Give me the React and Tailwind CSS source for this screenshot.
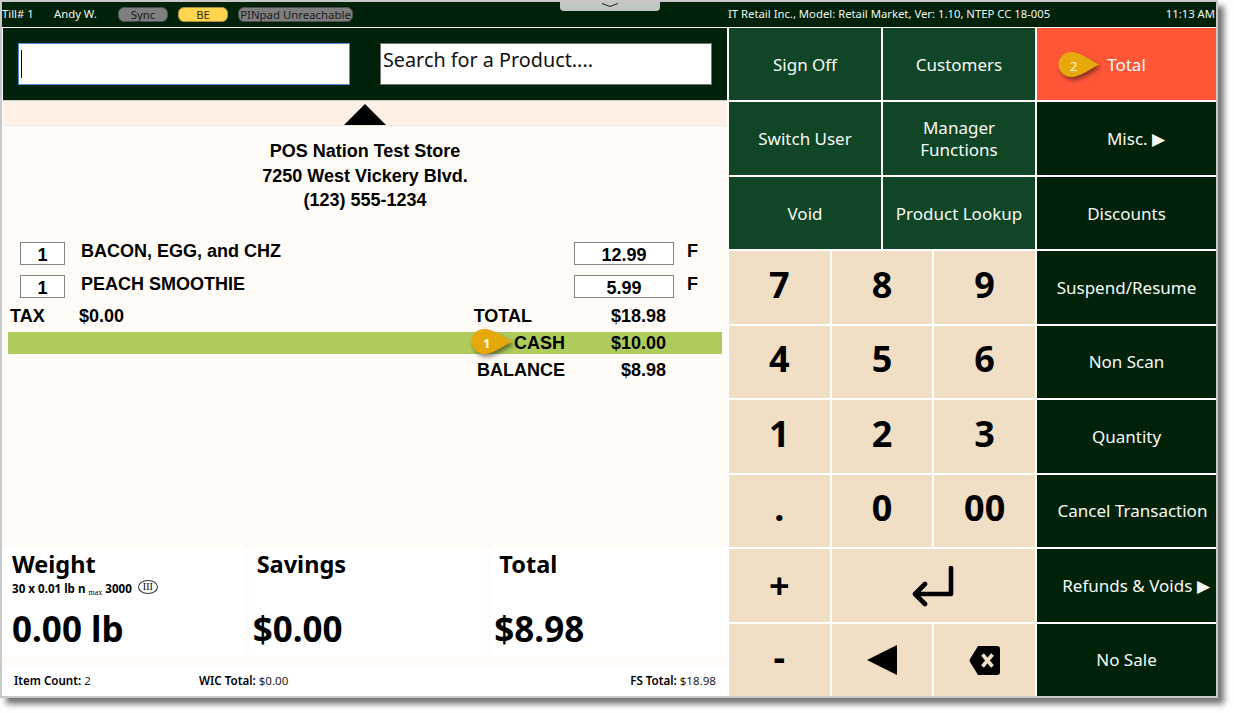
const segoe = "font-['Noto_Sans',sans-serif]";

const Marker = ({ n, className }) => (
  <div className={`absolute w-[42px] h-[28px] ${className}`}>
    <svg width="42" height="28" viewBox="0 0 42 28" className="drop-shadow-[2px_3px_2px_rgba(0,0,0,0.45)]">
      <path d="M13 1 C22 1 31 8 41 13.5 C31 19 22 26 13 26 A12.5 12.5 0 0 1 13 1 Z" fill="#e6a90c" />
    </svg>
    <span className="absolute left-[12px] top-[6px] text-[13px] leading-[18px] text-[#fff6dc] font-['Noto_Sans',sans-serif]">{n}</span>
  </div>
);

const Pill = ({ label, yellow, className }) => (
  <div
    className={`h-[15px] rounded-[6px] border border-solid flex items-center justify-center text-[11.4px] leading-none ${
      yellow ? 'bg-[#ffd64d] border-[#a8923a] text-[#3a2a10]' : 'bg-[#7f7f7f] border-[#4f4f4f] text-[#1c1c1c]'
    } ${className}`}
  >
    {label}
  </div>
);

const TopBar = () => (
  <div className={`relative h-[25px] bg-[#002208] flex items-center text-[#f2f6f2] text-[11.3px] ${segoe}`}>
    <span className="w-[52px]">Till# 1</span>
    <span className="w-[64px]">Andy W.</span>
    <Pill label="Sync" className="w-[50px]" />
    <Pill label="BE" yellow className="w-[50px] ml-[10px]" />
    <Pill label="PINpad Unreachable" className="w-[115px] ml-[10px]" />
    <span className="ml-[375px]">IT Retail Inc., Model: Retail Market, Ver: 1.10, NTEP CC 18-005</span>
    <span className="ml-auto pr-[1px]">11:13 AM</span>
    <div className="absolute left-[558px] top-0 w-[100px] h-[9px] bg-[#c0c8c2] rounded-b-[4px] flex justify-center">
      <svg width="18" height="6" viewBox="0 0 18 6" fill="none">
        <path d="M1 1.5 L9 4.5 L17 1.5" stroke="#222" strokeWidth="1" />
      </svg>
    </div>
  </div>
);

const SearchArea = () => (
  <>
    <div className={`h-[72px] bg-[#002208] flex items-center pl-[15px] pb-[1px] gap-[30px] ${segoe}`}>
      <div className="w-[332px] h-[42px] bg-white border border-[#4a90d9] flex items-center pl-[2px]">
        <div className="w-[1px] h-[28px] bg-black" />
      </div>
      <div className="w-[332px] h-[42px] bg-white border border-[#767676] pl-[2px] pt-[1px] text-[19.8px] leading-[30px] text-[#111]">
        Search for a Product....
      </div>
    </div>
    <div className="h-[1px] bg-[#c9ccc8]" />
    <div className="h-[25px] bg-[#fff1e6] border-b border-[#ece8e2] flex justify-center items-end">
      <svg width="42" height="21" viewBox="0 0 42 21">
        <polygon points="21,0 42,21 0,21" fill="#000" />
      </svg>
    </div>
  </>
);

const ItemRow = ({ name, price }) => (
  <div className="flex items-start h-[23px]">
    <div className="ml-[17px] w-[45px] h-[23px] bg-white border border-[#858585] text-center leading-[24px]">1</div>
    <div className="ml-[16px] leading-[18px]">{name}</div>
    <div className="ml-auto w-[100px] h-[23px] bg-white border border-[#858585] text-center leading-[24px]">{price}</div>
    <div className="ml-[13px] w-[40px] leading-[18px]">F</div>
  </div>
);

const Receipt = () => (
  <div className="relative flex-1 bg-[#fffbf6] font-['Liberation_Sans',sans-serif] font-bold text-[18px] text-black">
    <div className="pt-[13px] text-center leading-[24.5px]">
      <div>POS Nation Test Store</div>
      <div>7250 West Vickery Blvd.</div>
      <div>(123) 555-1234</div>
    </div>
    <div className="mt-[29px] flex flex-col gap-[10px]">
      <ItemRow name="BACON, EGG, and CHZ" price="12.99" />
      <ItemRow name="PEACH SMOOTHIE" price="5.99" />
    </div>
    <div className="mt-[8px] h-[20px] flex items-center leading-[20px] pr-[61px]">
      <span className="ml-[7px] w-[69px]">TAX</span>
      <span>$0.00</span>
      <span className="ml-auto mr-[34px]">TOTAL</span>
      <span className="w-[100px] text-right">$18.98</span>
    </div>
    <div className="mt-[6px] ml-[5px] w-[714px] h-[22px] pt-[2px] bg-[#aecb5c] flex justify-end items-center pr-[56px]">
      <span>CASH</span>
      <span className="w-[101px] text-right">$10.00</span>
    </div>
    <div className="mt-[5px] h-[22px] pt-[2px] flex justify-end items-center pr-[61px]">
      <span>BALANCE</span>
      <span className="w-[101px] text-right">$8.98</span>
    </div>
    <Marker n="1" className="left-[468px] top-[202px]" />
  </div>
);

const Card = ({ title, value, className, titleClass = 'pl-[9px]', valueClass, children }) => (
  <div className={`bg-white h-[110px] relative text-black pt-[1px] ${className}`}>
    <div className={`text-[23.5px] font-bold leading-[34px] -mt-[1px] ${titleClass}`}>{title}</div>
    {children}
    <div className={`absolute top-[59px] text-[35px] font-bold leading-[46px] ${valueClass}`}>{value}</div>
  </div>
);

const Bottom = () => (
  <div className={`${segoe} bg-[#fffbf6]`}>
    <div className="h-[110px] flex justify-between">
      <Card title="Weight" value="0.00 lb" className="w-[242px]" valueClass="left-[9px]">
        <div className="pl-[9px] text-[11.6px] font-bold leading-[14px] flex items-baseline mt-[1px]">
          30 x 0.01 lb n&nbsp;
          <span className="text-[8px] font-normal relative top-[2px] font-['Liberation_Serif',serif]">max</span>
          &nbsp;3000
          <span className="ml-[6px] inline-flex items-center justify-center w-[20px] h-[14px] rounded-[50%] border border-[#333] text-[10px] font-normal relative top-[-3px] font-['Liberation_Serif',serif]">III</span>
        </div>
      </Card>
      <Card title="Savings" value="$0.00" className="w-[239px] ml-[4px]" titleClass="pl-[8px]" valueClass="left-[4px]" />
      <Card title="Total" value="$8.98" className="w-[236px] ml-[4px]" titleClass="pl-[8px]" valueClass="left-[3px]" />
    </div>
    <div className="h-[9px]" />
    <div className="h-[30px] bg-white flex items-center text-[11.6px] text-[#1c1c1c] pb-[1px]">
      <span className="ml-[11px] w-[185px]"><b className="font-semibold text-black">Item Count:</b> 2</span>
      <span><b className="font-semibold text-black">WIC Total:</b> $0.00</span>
      <span className="ml-auto mr-[11px]"><b className="font-semibold text-black">FS Total:</b> $18.98</span>
    </div>
  </div>
);

const Backspace = () => (
  <svg width="31" height="30" viewBox="0 0 31 30">
    <path d="M9 1 H28 Q31 1 31 4 V27 Q31 30 28 30 H9 L1 17 Q0 15.5 1 14 Z" fill="#000" />
    <path d="M13.5 9.5 L23.5 21.5 M23.5 9.5 L13.5 21.5" stroke="#f0dfc5" strokeWidth="3.6" />
  </svg>
);

const EnterArrow = () => (
  <svg width="42" height="42" viewBox="0 0 42 42" fill="none">
    <path d="M39 2 V28 H4 M13 18 L3 28 L13 38" stroke="#000" strokeWidth="4.6" strokeLinejoin="round" strokeLinecap="round" />
  </svg>
);

const LeftTriangle = () => (
  <svg width="30" height="30" viewBox="0 0 30 30">
    <polygon points="30,0 30,30 0,15" fill="#000" />
  </svg>
);

const Key = ({ children, className = 'pb-[5px]' }) => (
  <div className={`bg-[#f0dfc5] flex items-center justify-center text-black font-bold text-[36px] ${className}`}>{children}</div>
);

const Action = ({ label, dark, className = '' }) => (
  <div className={`${dark ? 'bg-[#002208]' : 'bg-[#104525]'} flex items-center justify-center text-center pt-[1px] text-[#f7faf7] text-[17px] leading-[22px] ${className}`}>
    {label}
  </div>
);

const numpad = [
  ['7', '8', '9'],
  ['4', '5', '6'],
  ['1', '2', '3'],
  ['.', '0', '00'],
];

const RightPane = () => (
  <div className={`relative w-[487px] grid grid-cols-[306px_179px] gap-[2px] ${segoe}`}>
    <div className="grid grid-rows-9 gap-[2px]">
      <div className="grid grid-cols-2 gap-[2px]">
        <Action label="Sign Off" />
        <Action label="Customers" />
      </div>
      <div className="grid grid-cols-2 gap-[2px]">
        <Action label="Switch User" />
        <Action label={<>Manager<br />Functions</>} />
      </div>
      <div className="grid grid-cols-2 gap-[2px]">
        <Action label="Void" />
        <Action label="Product Lookup" />
      </div>
      {numpad.map((row) => (
        <div key={row[0]} className="grid grid-cols-3 gap-[2px]">
          {row.map((k) => (
            <Key key={k}>{k}</Key>
          ))}
        </div>
      ))}
      <div className="grid grid-cols-3 gap-[2px]">
        <Key className="pt-[1px]">+</Key>
        <Key className="col-span-2 pt-[3px]"><EnterArrow /></Key>
      </div>
      <div className="grid grid-cols-3 gap-[2px]">
        <Key>-</Key>
        <Key className="pt-[1px]"><LeftTriangle /></Key>
        <Key className="pt-[1px]"><Backspace /></Key>
      </div>
    </div>
    <div className="grid grid-rows-9 gap-[2px]">
      <Action label="Total" className="!bg-[#ff5638]" />
      <Action label="Misc. ▶" dark className="pl-[19px]" />
      <Action label="Discounts" dark />
      <Action label="Suspend/Resume" dark />
      <Action label="Non Scan" dark />
      <Action label="Quantity" dark />
      <Action label="Cancel Transaction" dark className="pl-[12px] whitespace-nowrap" />
      <Action label="Refunds & Voids ▶" dark className="pl-[19px] whitespace-nowrap" />
      <Action label="No Sale" dark />
    </div>
    <Marker n="2" className="left-[329px] top-[23px]" />
  </div>
);

export default function App() {
  return (
    <div className="w-[1234px] h-[713px] bg-white overflow-hidden">
      <div className="w-[1218px] h-[698px] border-2 border-[#c8c8c8] bg-white shadow-[6px_6px_6px_rgba(0,0,0,0.55)]">
        <TopBar />
        <div className="h-[1px] bg-white" />
        <div className="h-[668px] flex pl-[1px] gap-[2px]">
          <div className="w-[724px] flex flex-col">
            <SearchArea />
            <Receipt />
            <Bottom />
          </div>
          <RightPane />
        </div>
      </div>
    </div>
  );
}
